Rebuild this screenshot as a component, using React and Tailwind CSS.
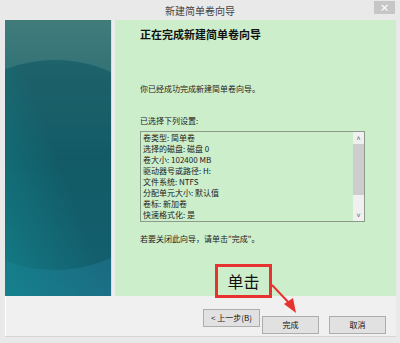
import React from 'react';

const settings = [
    '卷类型: 简单卷',
    '选择的磁盘: 磁盘 0',
    '卷大小: 102400 MB',
    '驱动器号或路径: H:',
    '文件系统: NTFS',
    '分配单元大小: 默认值',
    '卷标: 新加卷',
    '快速格式化: 是',
];

const font = { fontFamily: '"Noto Sans CJK SC", "Liberation Sans", sans-serif' };

function WizardButton({ children }) {
    return (
        <button className="h-[18px] w-[57px] border border-[#adadad] bg-[#e1e1e1] text-[8px] leading-none text-[#111]">
            {children}
        </button>
    );
}

export default function App() {
    return (
        <div className="relative h-[343px] w-[400px] overflow-hidden bg-[#e9e9e9] text-[#111]" style={font}>
            {/* title bar */}
            <div className="relative flex h-[20px] items-center justify-center">
                <span className="text-[10px] text-[#444]">新建简单卷向导</span>
                <div className="absolute right-[5px] top-[1px] flex h-[13px] w-[21px] items-center justify-center bg-[#c6c6c6] text-[10px] font-bold leading-none text-white">
                    ×
                </div>
            </div>

            <div className="ml-[5px] mr-[4px] border-b border-[#d6d6d6]">
                {/* main area */}
                <div className="flex h-[276px] bg-[#dcdcdc]">
                    <div className="relative w-[106px] overflow-hidden bg-gradient-to-b from-[#417c7b] via-[#17626d] to-[#1b6f87]">
                        <div className="absolute left-[-70px] top-[40px] h-[210px] w-[240px] rounded-[50%] bg-[#0f5662] opacity-60" />
                        <div className="absolute inset-0 bg-gradient-to-tr from-[#13888f]/70 via-transparent to-transparent" />
                    </div>
                    <div className="ml-[1px] w-[3px] bg-[#ececec]" />
                    <div className="flex-1 bg-[#cdeecb] pl-[25px]">
                        <div className="mt-[7px] text-[11px] font-bold leading-[14px]">正在完成新建简单卷向导</div>
                        <div className="mt-[42px] text-[8px] leading-[11px] text-[#222]">你已经成功完成新建简单卷向导。</div>
                        <div className="mt-[21px] text-[8px] leading-[11px] text-[#222]">已选择下列设置:</div>
                        <div className="mt-[5px] flex h-[91px] w-[225px] border border-[#8b9a8b]">
                            <div className="flex-1 overflow-hidden pl-[2px]">
                                {settings.map((s) => (
                                    <div key={s} className="text-[8px] leading-[11px] text-[#222]">{s}</div>
                                ))}
                            </div>
                            <div className="flex w-[11px] flex-col bg-[#f0f0f0]">
                                <div className="flex h-[12px] items-center justify-center text-[7px] leading-none text-[#555]">˄</div>
                                <div className="h-[51px] bg-[#cdcdcd]" />
                                <div className="flex-1" />
                                <div className="flex h-[12px] items-center justify-center text-[7px] leading-none text-[#555]">˅</div>
                            </div>
                        </div>
                        <div className="mt-[11px] text-[8px] leading-[11px] text-[#222]">若要关闭此向导，请单击"完成"。</div>
                    </div>
                </div>

                {/* button bar */}
                <div className="flex h-[40px] items-start justify-end border-l border-white bg-[#f0f0f0] pr-[10px] pt-[13px]">
                    <WizardButton>&lt; 上一步(B)</WizardButton>
                    <div className="ml-[2px]">
                        <WizardButton>完成</WizardButton>
                    </div>
                    <div className="ml-[10px]">
                        <WizardButton>取消</WizardButton>
                    </div>
                </div>
            </div>

            {/* annotation */}
            <div className="absolute left-[215px] top-[264px] flex h-[34px] w-[57px] items-center justify-center border-[3px] border-[#e8322f]">
                <span className="text-[16px] leading-none text-[#111]">单击</span>
            </div>
            <svg className="absolute left-0 top-0" width="400" height="343" viewBox="0 0 400 343">
                <line x1="272" y1="285" x2="291" y2="305" stroke="#e8322f" strokeWidth="2" />
                <polygon points="296,313 284,304 293,298" fill="#e8322f" />
            </svg>
        </div>
    );
}
